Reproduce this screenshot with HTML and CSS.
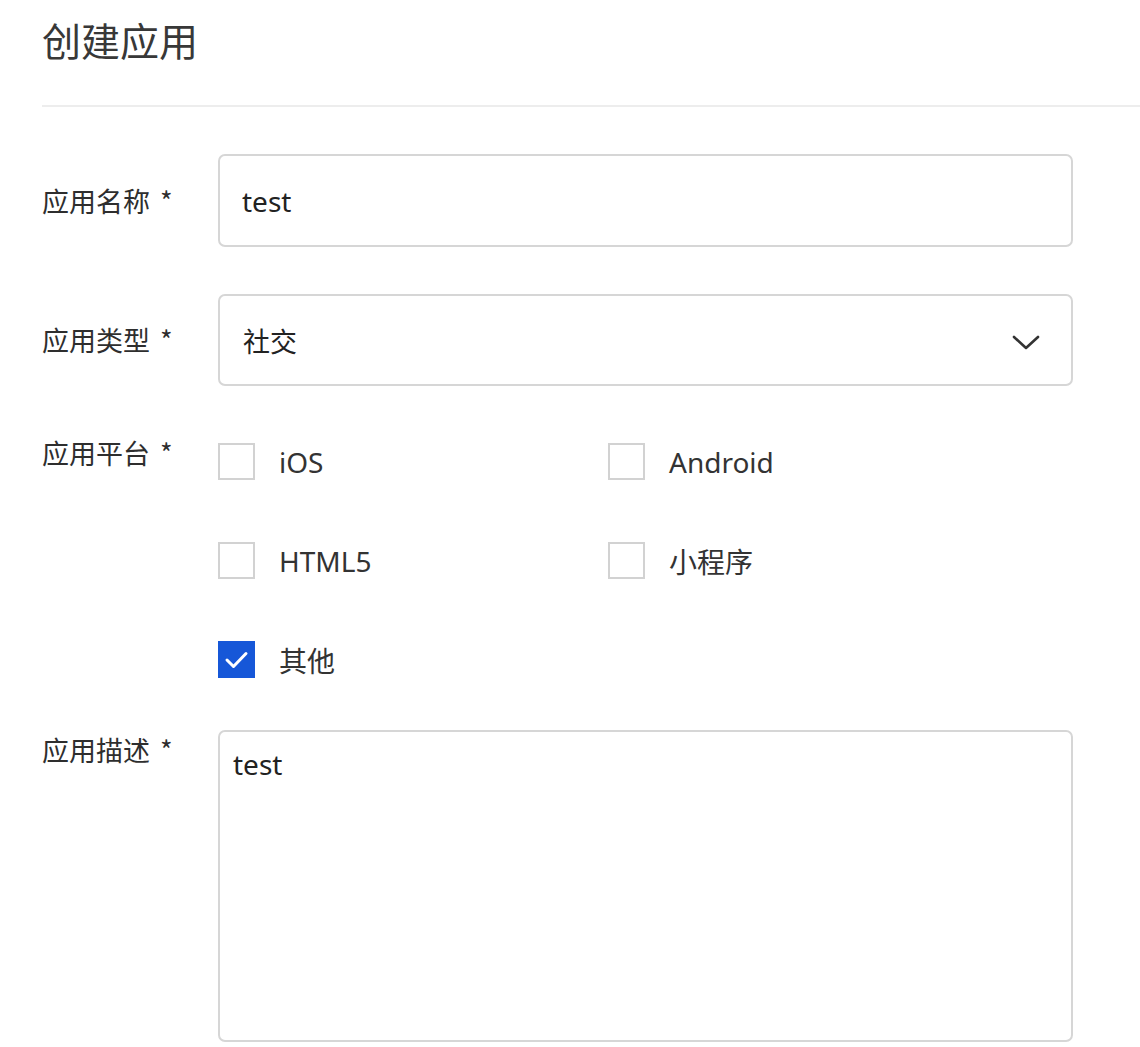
FILE: index.html
```html
<!DOCTYPE html>
<html lang="zh-CN">
<head>
<meta charset="utf-8">
<title>创建应用</title>
<link rel="stylesheet" href="styles.css">
</head>
<body>
<div class="page">
  <header class="header">
    <h1 class="title">创建应用</h1>
  </header>
  <form class="form">
    <div class="row row-center">
      <label class="label">应用名称 <span class="req">*</span></label>
      <input class="input" type="text" value="test">
    </div>
    <div class="row row-center">
      <label class="label">应用类型 <span class="req">*</span></label>
      <div class="select">
        <span class="select-value">社交</span>
        <svg class="chevron" width="28" height="16" viewBox="0 0 28 16"><path d="M2 2 L14 13 L26 2" fill="none" stroke="#333" stroke-width="2.6" stroke-linecap="round" stroke-linejoin="round"/></svg>
      </div>
    </div>
    <div class="row row-top row-platform">
      <label class="label">应用平台 <span class="req">*</span></label>
      <div class="checks">
        <div class="check"><span class="box"></span><span class="check-text">iOS</span></div>
        <div class="check"><span class="box"></span><span class="check-text">Android</span></div>
        <div class="check"><span class="box"></span><span class="check-text">HTML5</span></div>
        <div class="check"><span class="box"></span><span class="check-text">小程序</span></div>
        <div class="check"><span class="box box-checked"><svg width="37" height="37" viewBox="0 0 37 37"><path d="M9 19 L15.5 25.5 L28 12.5" fill="none" stroke="#fff" stroke-width="3" stroke-linecap="round" stroke-linejoin="round"/></svg></span><span class="check-text">其他</span></div>
      </div>
    </div>
    <div class="row row-top">
      <label class="label">应用描述 <span class="req">*</span></label>
      <textarea class="textarea">test</textarea>
    </div>
  </form>
</div>
</body>
</html>
```

FILE: styles.css
```css
html, body {
  margin: 0;
  padding: 0;
  background: #fff;
}
body {
  font-family: "Noto Sans", "Noto Sans CJK SC", sans-serif;
  color: #333;
  overflow: hidden;
}
.page {
  padding-left: 42px;
}
.header {
  padding-top: 20px;
  padding-bottom: 46px;
  border-bottom: 2px solid #ededed;
}
.title {
  margin: 0;
  font-size: 39px;
  line-height: 39px;
  font-weight: 400;
  color: #383838;
  font-family: "Noto Sans CJK SC", sans-serif;
}
.form {
  display: flex;
  flex-direction: column;
  gap: 47px;
  padding-top: 47px;
}
.row {
  display: grid;
  grid-template-columns: 176px 855px;
}
.row-center {
  align-items: center;
}
.row-top {
  align-items: start;
}
.label {
  font-family: "Noto Sans CJK SC", sans-serif;
  font-size: 27px;
  line-height: 40px;
  color: #2e2e2e;
  white-space: nowrap;
}
.req {
  margin-left: 4px;
}
.input, .select, .textarea {
  box-sizing: border-box;
  width: 855px;
  border: 2px solid #d6d6d6;
  border-radius: 7px;
  background: #fff;
  color: #222;
  font-family: "Noto Sans", "Noto Sans CJK SC", sans-serif;
  font-size: 28px;
  outline: none;
  margin: 0;
}
.input {
  height: 93px;
  padding: 0 22px;
}
.select {
  height: 92px;
  padding: 0 31px 0 23px;
  display: flex;
  align-items: center;
  justify-content: space-between;
}
.select-value {
  font-family: "Noto Sans CJK SC", sans-serif;
  font-size: 27px;
}
.chevron {
  display: block;
  margin-top: 6px;
}
.row-platform {
  padding-bottom: 5px;
}
.checks {
  display: grid;
  grid-template-columns: 390px auto;
  row-gap: 62px;
  padding-top: 10px;
}
.check {
  display: flex;
  align-items: center;
  gap: 24px;
  height: 37px;
}
.box {
  box-sizing: border-box;
  width: 37px;
  height: 37px;
  border: 2px solid #d2d2d2;
  background: #fff;
  display: block;
  flex: none;
}
.box-checked {
  background: #1657d8;
  border-color: #1657d8;
}
.box-checked svg {
  display: block;
  margin: -2px;
}
.check-text {
  font-size: 28px;
  color: #333;
}
.textarea {
  display: block;
  height: 312px;
  padding: 14px 13px;
  resize: none;
  line-height: 1.3;
}
```
